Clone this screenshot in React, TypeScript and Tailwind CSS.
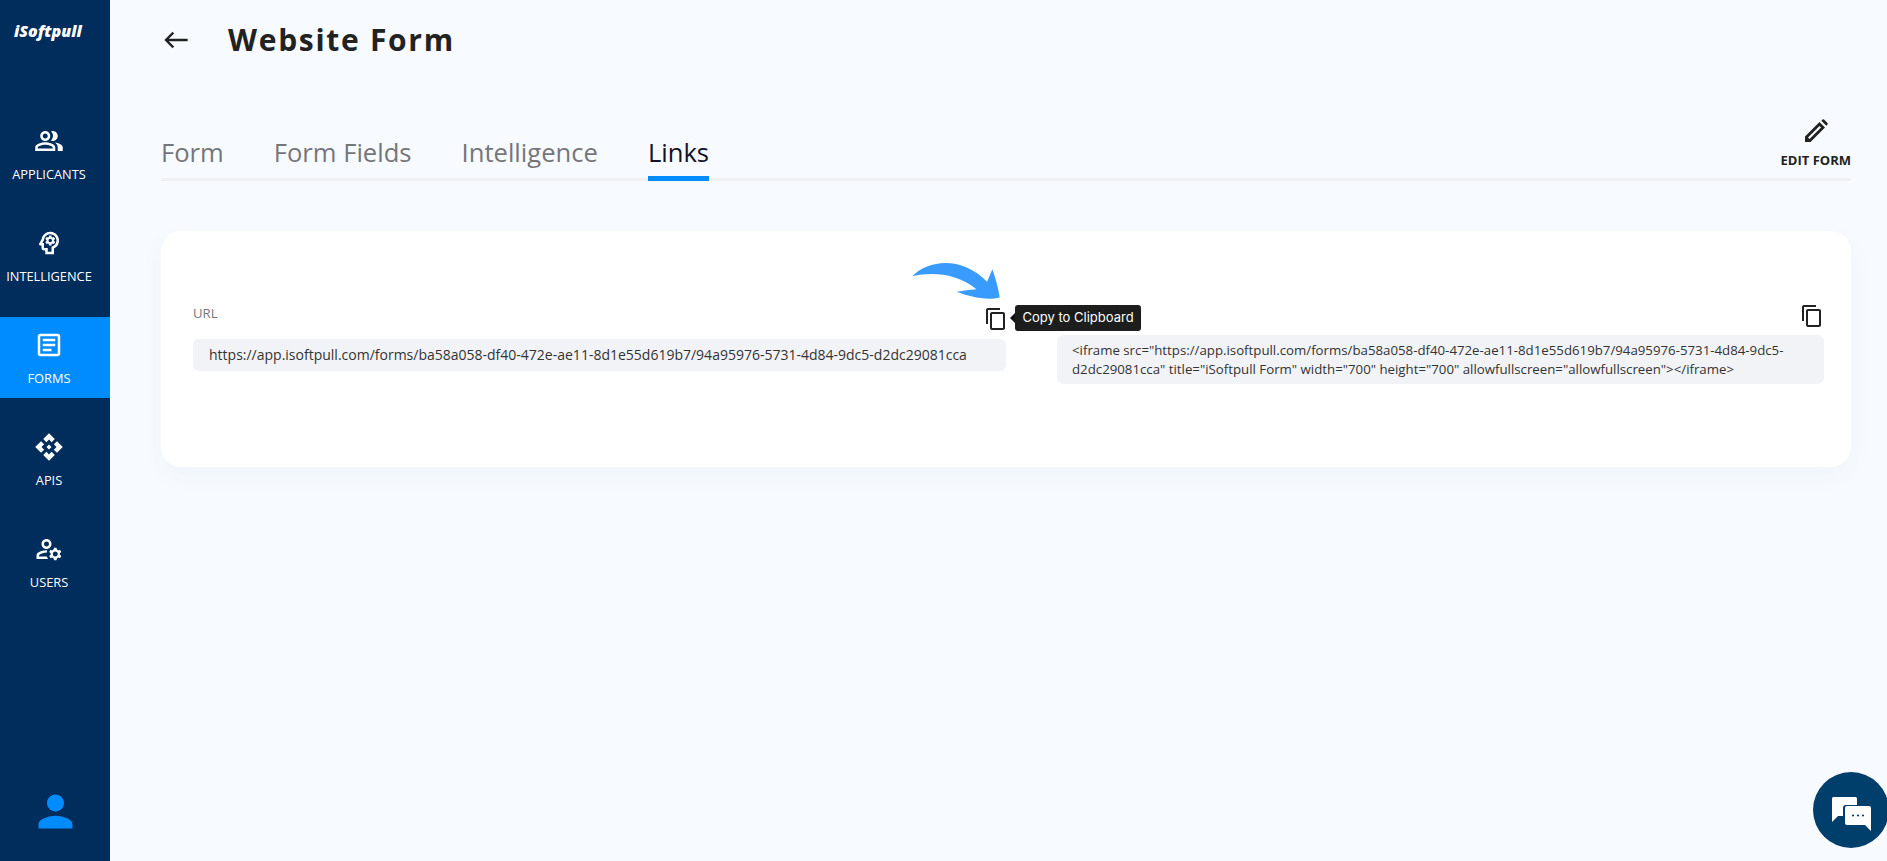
import {
  MdApi,
  MdOutlineArticle,
  MdOutlineContentCopy,
  MdOutlineManageAccounts,
  MdOutlinePeopleAlt,
  MdOutlinePsychology,
  MdOutlineWest,
  MdPerson,
} from "react-icons/md";

const navItems = [
  { label: "APPLICANTS", Icon: MdOutlinePeopleAlt },
  { label: "INTELLIGENCE", Icon: MdOutlinePsychology },
  { label: "FORMS", Icon: MdOutlineArticle, active: true },
  { label: "APIS", Icon: MdApi },
  { label: "USERS", Icon: MdOutlineManageAccounts },
];

const tabs = ["Form", "Form Fields", "Intelligence", "Links"];

const url =
  "https://app.isoftpull.com/forms/ba58a058-df40-472e-ae11-8d1e55d619b7/94a95976-5731-4d84-9dc5-d2dc29081cca";

const App = () => {
  return (
    <div className="flex h-screen overflow-hidden bg-[#f7fbff] font-['Open_Sans',sans-serif] text-[#222]">
      {/* Sidebar */}
      <aside className="flex w-[110px] shrink-0 flex-col bg-[#002d5b] text-white">
        <div className="h-[113px] pl-[14px] pt-[20px] text-[16px] font-extrabold italic leading-[22px]">
          iSoftpull
        </div>
        {navItems.map(({ label, Icon, active }) => (
          <div key={label} className="h-[102px] shrink-0">
            <div
              className={`flex h-[81px] flex-col items-center pr-[12px] pt-[13px] ${active ? "bg-[#008cff]" : ""}`}
            >
              <Icon className="h-[30px] w-[30px]" />
              <span className="mt-[9px] text-[12.8px] leading-[18px]">{label}</span>
            </div>
          </div>
        ))}
        <div className="mt-auto flex justify-center pb-[24px]">
          <MdPerson className="h-[51px] w-[51px] text-[#008cff]" />
        </div>
      </aside>

      {/* Main */}
      <main className="flex-1 pl-[51px] pr-[36px]">
        <div className="flex h-[80px] items-center pl-[1px]">
          <MdOutlineWest className="h-[28px] w-[28px] text-[#222]" />
          <h1 className="ml-[38px] text-[30px] font-bold leading-[40px] tracking-[1.7px] text-[#222]">
            Website Form
          </h1>
        </div>

        {/* Tabs */}
        <div className="relative mt-[29px] flex h-[72px] items-end justify-between border-b-[3px] border-[#eff0f2]">
          <div className="flex gap-[50px]">
            {tabs.map((tab) => (
              <div
                key={tab}
                className={`-mb-[3px] h-[50px] pt-[4px] text-[25.6px] leading-[36px] ${tab === "Links" ? "border-b-[5px] border-[#008cff] text-[#12122b]" : "text-[#75767a]"}`}
              >
                {tab}
              </div>
            ))}
          </div>
          <div className="mb-[9px] flex flex-col items-center">
            <svg viewBox="0 0 24 24" className="mb-[8px] mt-[3px] h-[24px] w-[24px]" fill="#222">
              <path
                fillRule="evenodd"
                d="M1 23V17.5L15.5 3 21 8.5 6.5 23ZM4 18.5 15.5 7 17 8.5 5.5 20Z"
              />
              <path d="M17.3 1.7 18.5.5Q19.2 0 20 .5L23.5 4Q24 4.8 23.5 5.5L22.3 6.7Z" />
            </svg>
            <span className="text-[13px] font-bold leading-[18px] text-[#222]">EDIT FORM</span>
          </div>
        </div>

        {/* Card */}
        <section className="mt-[50px] grid h-[236px] grid-cols-[813px_767px] justify-between rounded-[20px] bg-white pl-[32px] pr-[27px] shadow-[0_8px_24px_rgba(40,80,130,0.04)]">
          <div className="relative pt-[72px]">
            <div className="h-[36px] text-[13.2px] leading-[20px] text-[#75767a]">URL</div>
            <div className="rounded-[6px] bg-[#f2f3f7] py-[6px] pl-[16px] text-[14px] leading-[20px] text-[#333]">
              {url}
            </div>

            {/* Annotation arrow over the copy button */}
            <svg
              className="absolute left-[687px] top-[9px] h-[67px] w-[133px]"
              viewBox="0 0 400 200"
            >
              <path
                d="M97 108C150 55 250 50 322 125L338 87C348 115 356 145 360 172C320 182 270 170 230 155C250 150 270 150 290 147C230 100 160 95 97 108Z"
                fill="#3a9bff"
              />
            </svg>
            <MdOutlineContentCopy className="absolute left-[791px] top-[76px] h-[24px] w-[24px] text-[#222]" />

            {/* Tooltip */}
            <div className="absolute left-[822px] top-[74px] z-10 flex h-[26px] items-center whitespace-nowrap rounded-[3px] bg-[#111]/95 px-[7.5px] font-['Inter',sans-serif] text-[13px] text-white">
              <span className="absolute -left-[5px] top-[8px] h-0 w-0 border-y-[5px] border-r-[5px] border-y-transparent border-r-[#111]" />
              Copy to Clipboard
            </div>
          </div>

          <div className="relative pt-[72px]">
            <div className="flex h-[32px] justify-between">
              <span className="-ml-[9px] text-[13.2px] leading-[22px] text-[#75767a]">Embed Code</span>
              <MdOutlineContentCopy className="mt-[1px] h-[24px] w-[24px] text-[#222]" />
            </div>
            <div className="rounded-[6px] bg-[#f2f3f7] pb-[5px] pl-[15px] pr-[20px] pt-[6px] text-[13.25px] leading-[19px] text-[#333]">
              {`<iframe src="${url}" title="iSoftpull Form" width="700" height="700" allowfullscreen="allowfullscreen"></iframe>`}
            </div>
          </div>
        </section>
      </main>

      {/* Chat widget */}
      <div className="absolute left-[1813px] top-[772px] flex h-[76px] w-[76px] items-center justify-center rounded-full bg-[#003e6b] pt-[8px]">
        <svg viewBox="0 0 39 34" className="h-[34px] w-[39px]">
          <path d="M1.5 0H23.5a1.5 1.5 0 0 1 1.5 1.5V8H14a3 3 0 0 0-3 3v8H6l-6 6V1.5A1.5 1.5 0 0 1 1.5 0z" fill="#fff" />
          <path d="M15 9h22a2 2 0 0 1 2 2v23l-6-6H15a2 2 0 0 1-2-2V11a2 2 0 0 1 2-2z" fill="#fff" />
          <circle cx="21" cy="18.5" r="1.1" fill="#003e6b" />
          <circle cx="26" cy="18.5" r="1.1" fill="#003e6b" />
          <circle cx="31" cy="18.5" r="1.1" fill="#003e6b" />
        </svg>
      </div>
    </div>
  );
};

export default App;
